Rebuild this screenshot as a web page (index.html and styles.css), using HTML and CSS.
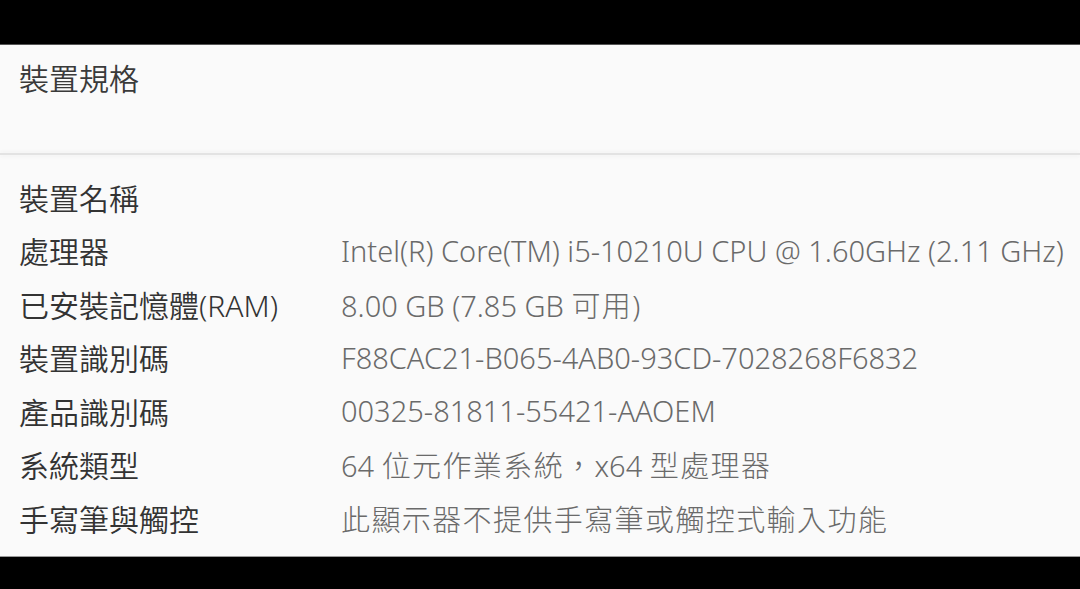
FILE: index.html
```html
<!DOCTYPE html>
<html lang="zh-Hant">
<head>
    <meta charset="UTF-8">
    <meta name="viewport" content="width=device-width, initial-scale=1.0">
    <title>裝置規格</title>
    <link rel="stylesheet" href="styles.css">
</head>
<body>
    <div class="screen">
        <div class="topbar"></div>
        <div class="panel">
            <div class="header">
                <h1>裝置規格</h1>
            </div>
            <div class="divider"></div>
            <div class="specs">
                <div class="label">裝置名稱</div>
                <div class="value"></div>

                <div class="label">處理器</div>
                <div class="value">Intel(R) Core(TM) i5-10210U CPU @ 1.60GHz (2.11 GHz)</div>

                <div class="label">已安裝記憶體(RAM)</div>
                <div class="value">8.00 GB (7.85 GB <span class="cjk">可用</span>)</div>

                <div class="label">裝置識別碼</div>
                <div class="value">F88CAC21-B065-4AB0-93CD-7028268F6832</div>

                <div class="label">產品識別碼</div>
                <div class="value">00325-81811-55421-AAOEM</div>

                <div class="label">系統類型</div>
                <div class="value">64 <span class="cjk">位元作業系統，</span>x64 <span class="cjk">型處理器</span></div>

                <div class="label">手寫筆與觸控</div>
                <div class="value"><span class="cjk">此顯示器不提供手寫筆或觸控式輸入功能</span></div>
            </div>
        </div>
    </div>
</body>
</html>
```

FILE: styles.css
```css
body {
    margin: 0;
    background-color: #000;
    font-family: "Noto Sans", "Noto Sans CJK TC", sans-serif;
}
.screen {
    display: flex;
    flex-direction: column;
    height: 589px;
    overflow: hidden;
}
.topbar {
    height: 44px;
    border-bottom: 1px solid #555;
    flex-shrink: 0;
}
.panel {
    height: 511px;
    background-color: #fafafa;
    border-bottom: 1px solid #9a9a9a;
    flex-shrink: 0;
}
.header {
    height: 108px;
    padding: 0 19px;
    box-sizing: border-box;
}
h1 {
    margin: 0;
    padding-top: 7px;
    font-size: 30px;
    font-weight: 350;
    line-height: 53px;
    color: #3a3a3a;
}
.divider {
    height: 2px;
    background-color: #e3e3e3;
    box-shadow: 0 -2px 3px rgba(0, 0, 0, 0.03), 0 2px 3px rgba(0, 0, 0, 0.03);
}
.specs {
    display: grid;
    grid-template-columns: 322px 1fr;
    grid-auto-rows: 53.5px;
    align-items: center;
    padding: 15px 0 0 19px;
}
.label {
    font-size: 30px;
    font-weight: 350;
    color: #333;
    white-space: nowrap;
}
.value {
    font-size: 29px;
    color: #6a6a6a;
    white-space: nowrap;
    font-weight: 300;
}
.cjk {
    letter-spacing: 1.4px;
}
```
